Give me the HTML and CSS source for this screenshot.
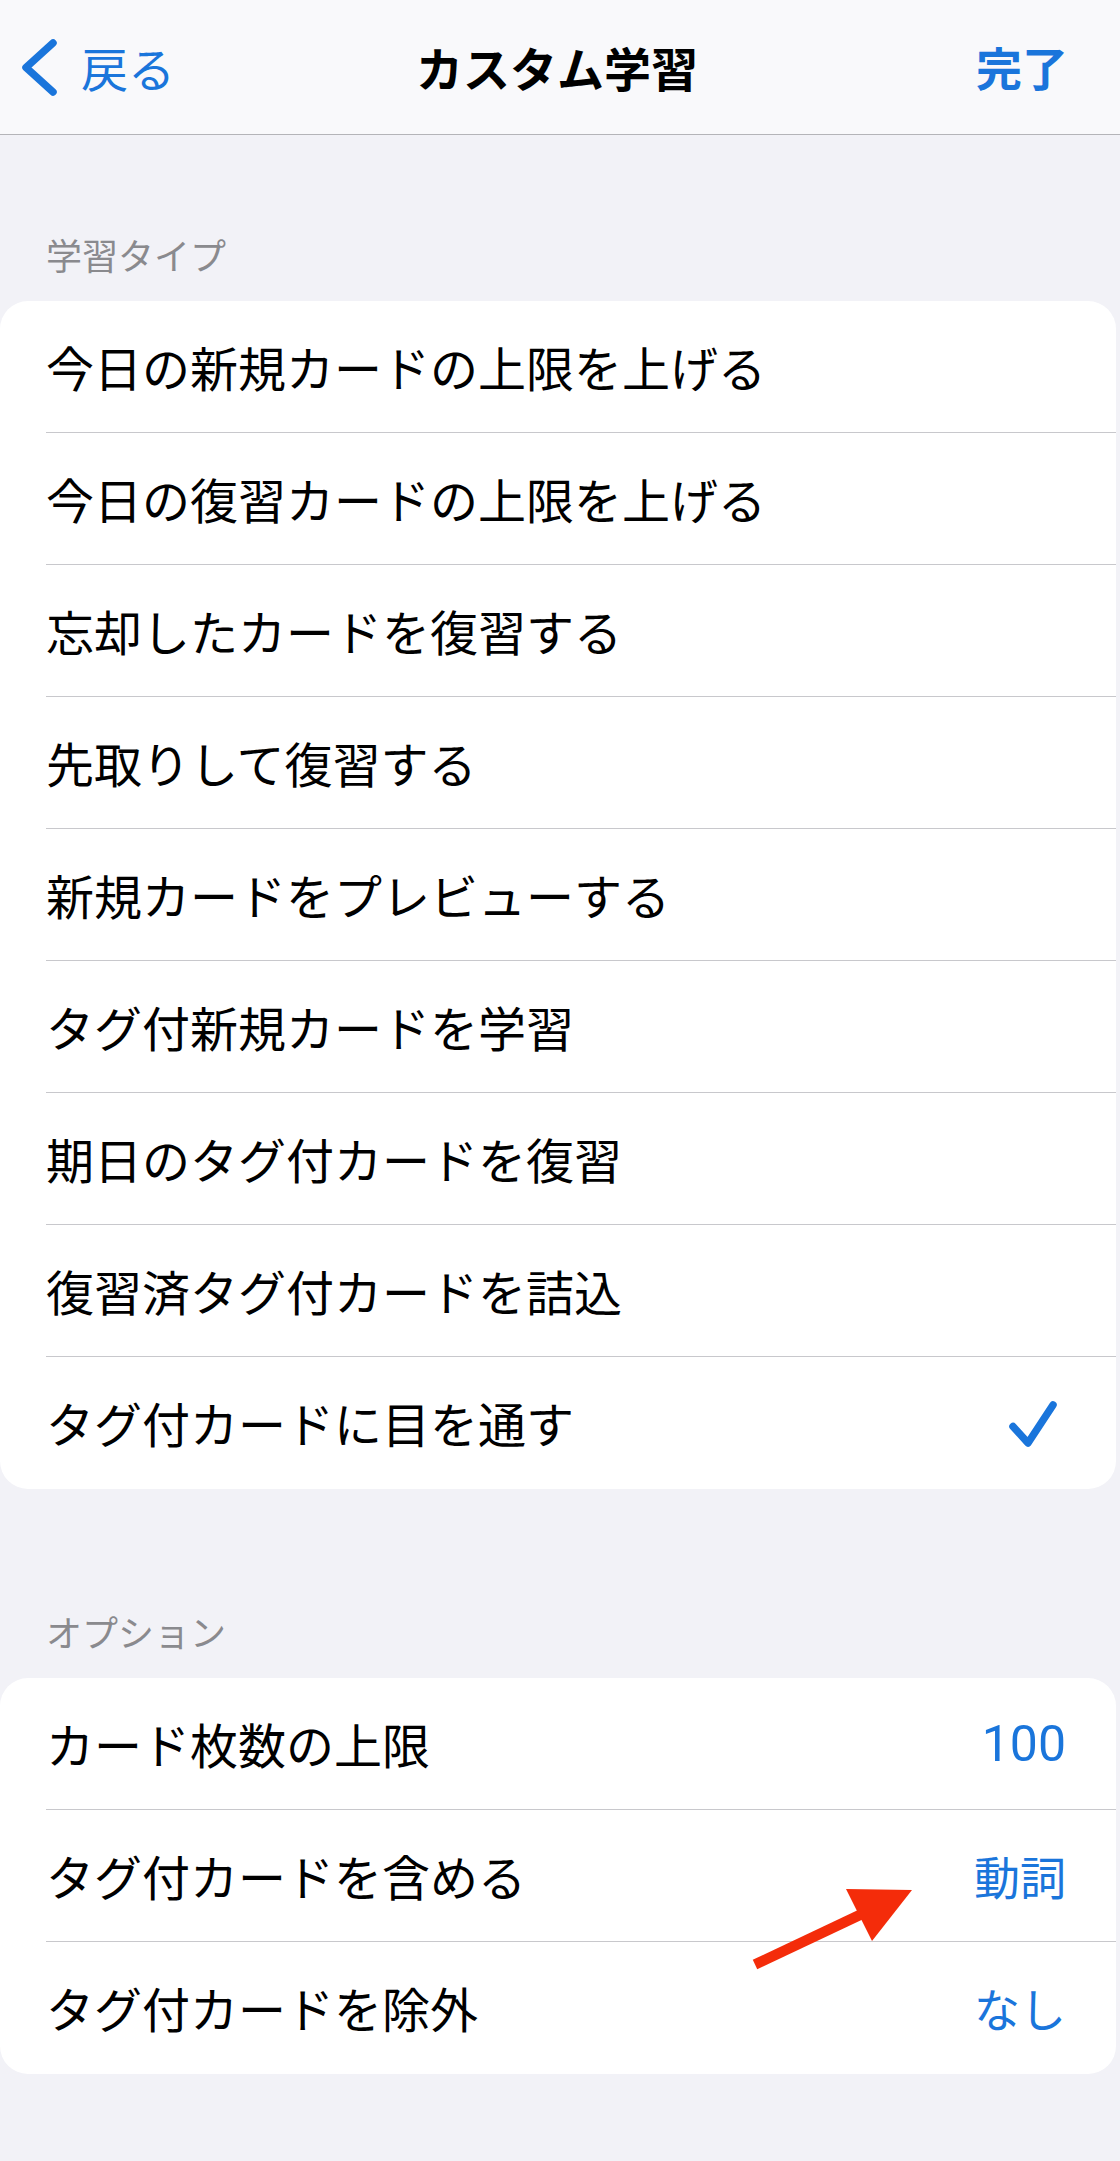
FILE: index.html
```html
<!DOCTYPE html>
<html lang="ja">
<head>
<meta charset="utf-8">
<title>カスタム学習</title>
<link rel="stylesheet" href="styles.css">
</head>
<body>
<div class="page">
  <header class="navbar">
    <div class="nav-left">
      <svg class="chevron" width="40" height="64" viewBox="0 0 40 64">
        <polyline points="35,8 8,32.5 35,57" fill="none" stroke="#1a75db" stroke-width="7.5" stroke-linecap="round" stroke-linejoin="round"/>
      </svg>
      <span class="back-text">戻る</span>
    </div>
    <div class="nav-title">カスタム学習</div>
    <div class="nav-right">完了</div>
  </header>

  <main class="content">
    <section class="group group-first">
      <div class="group-label">学習タイプ</div>
      <div class="card">
        <div class="row"><div class="row-inner"><span class="row-text">今日の新規カードの上限を上げる</span></div></div>
        <div class="row"><div class="row-inner"><span class="row-text">今日の復習カードの上限を上げる</span></div></div>
        <div class="row"><div class="row-inner"><span class="row-text">忘却したカードを復習する</span></div></div>
        <div class="row"><div class="row-inner"><span class="row-text">先取りして復習する</span></div></div>
        <div class="row"><div class="row-inner"><span class="row-text">新規カードをプレビューする</span></div></div>
        <div class="row"><div class="row-inner"><span class="row-text">タグ付新規カードを学習</span></div></div>
        <div class="row"><div class="row-inner"><span class="row-text">期日のタグ付カードを復習</span></div></div>
        <div class="row"><div class="row-inner"><span class="row-text">復習済タグ付カードを詰込</span></div></div>
        <div class="row"><div class="row-inner"><span class="row-text">タグ付カードに目を通す</span>
          <svg class="check" width="50" height="50" viewBox="0 0 50 50">
            <polyline points="5,28.5 20,45 45,7" fill="none" stroke="#1a75db" stroke-width="7.5" stroke-linecap="round" stroke-linejoin="round"/>
          </svg>
        </div></div>
      </div>
    </section>

    <section class="group group-second">
      <div class="group-label">オプション</div>
      <div class="card card-options">
        <div class="row"><div class="row-inner"><span class="row-text">カード枚数の上限</span><span class="row-value num">100</span></div></div>
        <div class="row"><div class="row-inner"><span class="row-text">タグ付カードを含める</span><span class="row-value">動詞</span></div></div>
        <div class="row"><div class="row-inner"><span class="row-text">タグ付カードを除外</span><span class="row-value">なし</span></div></div>
      </div>
      <svg class="annotation-arrow" width="180" height="100" viewBox="0 0 180 100">
        <line x1="15" y1="84.5" x2="124" y2="33" stroke="#f42c0a" stroke-width="10.5"/>
        <polygon points="106,9 172,10 132,61" fill="#f42c0a"/>
      </svg>
    </section>
  </main>
</div>
</body>
</html>
```

FILE: styles.css
```css
html, body {
  margin: 0;
  padding: 0;
}

body {
  background: #f2f2f7;
  font-family: "Noto Sans CJK JP", "Noto Sans", sans-serif;
  color: #000;
}

.page {
  width: 1120px;
  min-height: 2161px;
  background: #f2f2f7;
}

.navbar {
  height: 134px;
  background: #f9f9fb;
  border-bottom: 1px solid #b4b4b8;
  display: grid;
  grid-template-columns: 1fr auto 1fr;
  align-items: center;
}

.nav-left {
  display: flex;
  align-items: center;
  padding-left: 18px;
}

.chevron {
  display: block;
  flex: none;
}

.back-text {
  margin-left: 23px;
  font-size: 47px;
  line-height: 1.2;
  color: #1a75db;
}

.nav-title {
  font-size: 47px;
  font-weight: 700;
  line-height: 1.2;
  color: #000;
  padding-right: 6px;
}

.nav-right {
  justify-self: end;
  padding-right: 52px;
  font-size: 46px;
  font-weight: 700;
  line-height: 1.2;
  color: #1a75db;
}

.content {
  padding-top: 97px;
}

.group {
  position: relative;
}

.group-second {
  margin-top: 120px;
}

.group-label {
  padding-left: 46px;
  font-size: 36px;
  line-height: 44px;
  color: #8a8a8e;
  margin-bottom: 25px;
}

.card {
  background: #fff;
  border-radius: 28px;
  margin-right: 4px;
  overflow: hidden;
}

.row {
  padding-left: 46px;
}

.row-inner {
  height: 131px;
  border-bottom: 1px solid #c8c8cc;
  display: flex;
  align-items: center;
  justify-content: space-between;
  padding-right: 50px;
}

.row:last-child .row-inner {
  border-bottom: none;
  height: 132px;
}

.row-text {
  font-size: 48px;
  line-height: 1.2;
  color: #000;
  white-space: nowrap;
}

.row-value {
  font-size: 46px;
  line-height: 1.2;
  color: #1a75db;
}

.row-value.num {
  font-family: Roboto, "Noto Sans CJK JP", sans-serif;
  font-size: 50px;
}

.check {
  display: block;
  margin-right: 8px;
}

.annotation-arrow {
  position: absolute;
  left: 740px;
  top: 271px;
}
```
